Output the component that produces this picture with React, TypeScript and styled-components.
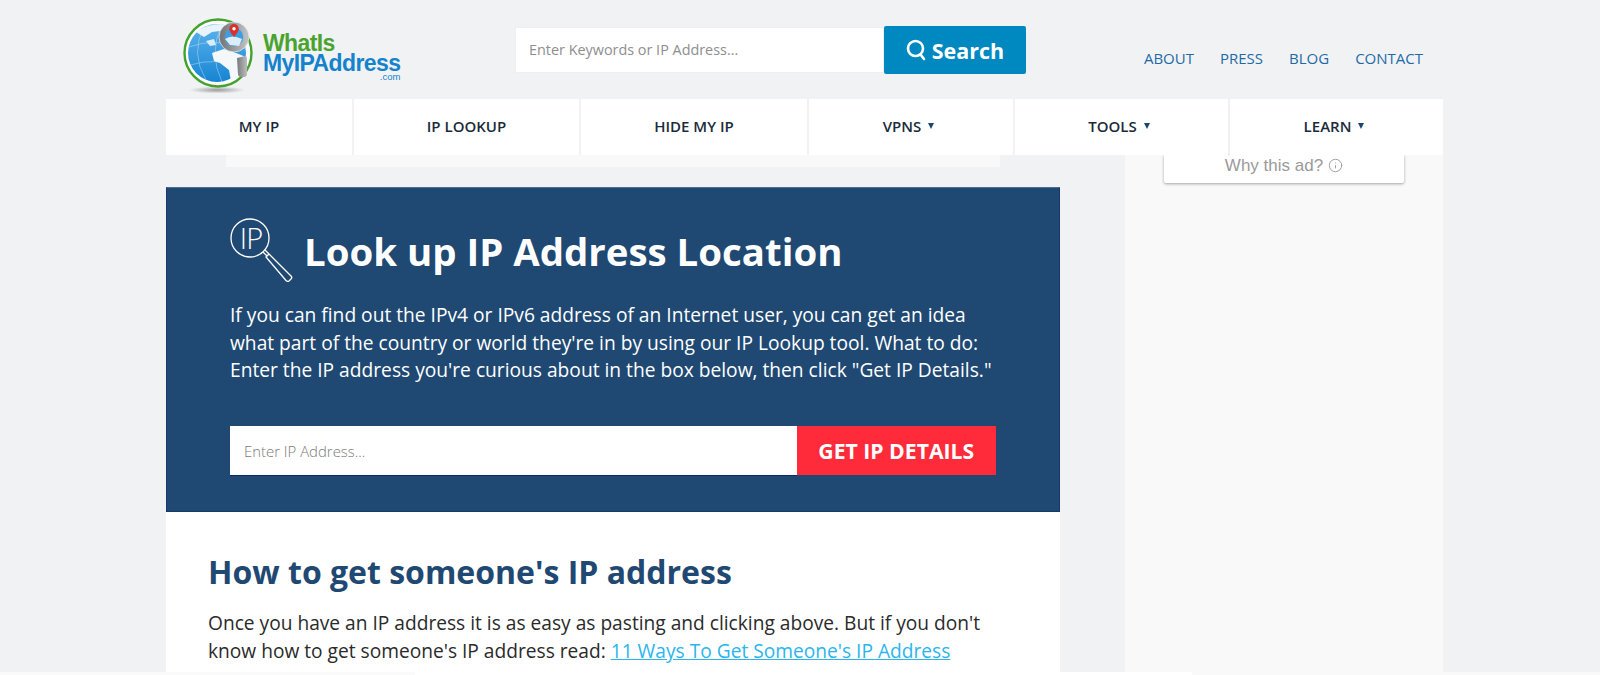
import React from "react";
import styled, { createGlobalStyle } from "styled-components";
import { Info } from "lucide-react";

const GlobalStyle = createGlobalStyle`
  html, body {
    margin: 0;
    padding: 0;
    height: 675px;
    overflow: hidden;
    background: #f1f2f4;
    font-family: "Open Sans", "Liberation Sans", sans-serif;
  }
  * { box-sizing: border-box; }
`;

const Wrapper = styled.div`
  width: 1277px;
  margin-left: 166px;
`;

const Header = styled.header`
  height: 99px;
  display: flex;
  align-items: flex-start;
`;

const LogoLink = styled.a`
  width: 349px;
  height: 99px;
  padding: 15px 0 0 10px;
  display: flex;
  align-items: flex-start;
  gap: 2px;
`;

const LogoText = styled.div`
  display: flex;
  flex-direction: column;
  padding-top: 18px;
  font-family: "Liberation Sans", Arial, sans-serif;
  font-weight: 700;
  letter-spacing: -0.6px;
`;

const LogoTop = styled.span`
  color: #4aa32e;
  font-size: 23px;
  line-height: 20px;
`;

const LogoBottom = styled.span`
  color: #1482cc;
  font-size: 23px;
  line-height: 20px;
`;

const LogoCom = styled.span`
  color: #1482cc;
  font-size: 9.5px;
  font-weight: 400;
  line-height: 8px;
  text-align: right;
  letter-spacing: 0;
`;

const SearchForm = styled.form`
  display: flex;
  margin-top: 26px;
`;

const SearchInput = styled.div`
  width: 369px;
  height: 46px;
  margin-top: 1px;
  background: #fff;
  border: 1px solid #eeeff1;
  padding: 0 0 2px 13px;
  display: flex;
  align-items: center;
  font-size: 14.4px;
  color: #8e8e8e;
`;

const SearchButton = styled.button`
  width: 142px;
  height: 48px;
  border: 0;
  border-radius: 2px;
  background: #0088c0;
  color: #fff;
  font-family: inherit;
  font-weight: 700;
  font-size: 21.5px;
  display: flex;
  align-items: center;
  justify-content: center;
  gap: 6px;
`;

const TopLinks = styled.nav`
  margin-left: auto;
  display: flex;
  gap: 26px;
  padding: 49px 20px 0 0;
`;

const TopLink = styled.a`
  color: #1f6aa5;
  font-size: 15px;
  line-height: 18px;
`;

const MainNav = styled.nav`
  display: flex;
  gap: 2px;
  height: 56px;
  position: relative;
  z-index: 2;
`;

const NavItem = styled.a<{ $w: number }>`
  width: ${(p) => p.$w}px;
  background: #fff;
  display: flex;
  align-items: center;
  justify-content: center;
  gap: 7px;
  padding-bottom: 2px;
  color: #1a2a3a;
  font-size: 15px;
  font-weight: 600;
`;

const Caret = styled.span`
  width: 0;
  height: 0;
  margin-right: 5px;
  border-left: 3.5px solid transparent;
  border-right: 3.5px solid transparent;
  border-top: 6px solid #1f466f;
`;

const Columns = styled.div`
  display: flex;
  align-items: stretch;
`;

const MainColumn = styled.main`
  width: 894px;
`;

const AdRemnant = styled.div`
  width: 774px;
  height: 12px;
  margin: 0 0 20px 60px;
  background: #f9f9fa;
`;

const LookupPanel = styled.section`
  background: #1f4973;
  border: 1px solid #16386a;
  border-top-color: #4d6f93;
  height: 325px;
  padding: 30px 63px 0 63px;
  color: #fff;
`;

const LookupTitleRow = styled.div`
  display: flex;
  align-items: flex-start;
  gap: 10px;
`;

const LookupTitle = styled.h1`
  margin: 9px 0 0;
  font-size: 38.4px;
  line-height: 48px;
  font-weight: 700;
  white-space: nowrap;
`;

const LookupText = styled.p`
  margin: 15px 0 0;
  font-size: 19.2px;
  line-height: 27.5px;
  font-weight: 500;
  white-space: nowrap;
`;

const LookupForm = styled.form`
  display: flex;
  margin-top: 42px;
`;

const LookupInput = styled.div`
  width: 568px;
  height: 49px;
  background: #fff;
  box-shadow: 0 1px 0 #0d2a66;
  padding: 1px 0 0 14px;
  display: flex;
  align-items: center;
  font-size: 14.9px;
  font-weight: 300;
  color: #7a7a7a;
`;

const LookupButton = styled.button`
  width: 200px;
  height: 49px;
  border: 0;
  background: #ff2a3a;
  color: #fff;
  font-family: inherit;
  font-size: 21.2px;
  font-weight: 700;
  padding: 0;
  white-space: nowrap;
`;

const Article = styled.article`
  background: #fff;
  height: 164px;
  padding: 38px 42px 0;
`;

const ArticleTitle = styled.h2`
  margin: 0;
  color: #1f4973;
  font-size: 32px;
  line-height: 44px;
  font-weight: 700;
`;

const ArticleText = styled.p`
  margin: 16px 0 0;
  color: #2a2a2a;
  font-size: 19.16px;
  line-height: 27.5px;
  font-weight: 400;
  white-space: nowrap;
`;

const ArticleLink = styled.a`
  color: #2bb5ee;
  text-decoration: underline;
`;

const Sidebar = styled.aside`
  width: 318px;
  margin-left: 65px;
  height: 520px;
  background: #f9f9fa;
  padding: 0 39px 0 39px;
`;

const AdCard = styled.div`
  height: 28px;
  background: #fff;
  border-radius: 0 0 2px 2px;
  box-shadow: 0 1px 3px rgba(0, 0, 0, 0.35);
  display: flex;
  align-items: flex-start;
  justify-content: center;
  gap: 5px;
  font-family: "Liberation Sans", Arial, sans-serif;
  font-size: 17px;
  line-height: 21px;
  color: #9a9a9a;
`;

const InfoIcon = styled(Info)`
  margin-top: 3px;
`;

const BottomStrip = styled.div`
  position: absolute;
  left: 0;
  right: 0;
  top: 672px;
  height: 3px;
  display: flex;
`;

const StripPart = styled.div<{ $w: number; $bg: string }>`
  width: ${(p) => p.$w}px;
  background: ${(p) => p.$bg};
`;

const GlobeLogo = () => (
  <svg width="85" height="80" viewBox="0 0 85 80">
    <defs>
      <linearGradient id="sea" x1="0" y1="0" x2="0" y2="1">
        <stop offset="0" stopColor="#5db4ec" />
        <stop offset="1" stopColor="#1784d2" />
      </linearGradient>
      <linearGradient id="steel" x1="0" y1="0" x2="1" y2="0">
        <stop offset="0" stopColor="#77797c" />
        <stop offset="1" stopColor="#bcbdbf" />
      </linearGradient>
      <radialGradient id="shade">
        <stop offset="0" stopColor="#9c9c9c" />
        <stop offset="1" stopColor="#f1f2f4" />
      </radialGradient>
    </defs>
    <ellipse cx="41" cy="75" rx="28" ry="3.5" fill="url(#shade)" />
    <circle cx="42" cy="38" r="33.5" fill="#fff" stroke="#43a22d" strokeWidth="2.4" />
    <circle cx="41" cy="38" r="29" fill="url(#sea)" />
    <g stroke="#bfe0f6" strokeWidth="0.6" fill="none" opacity="0.8">
      <path d="M12.5 32 Q40 22 70 34" />
      <path d="M14 50 Q40 42 68 52" />
      <path d="M28 12 Q14 38 30 65" />
      <path d="M46 9 Q32 38 46 67" />
    </g>
    <path d="M20 17 Q30 9 46 9 L52 12 L44 16 L36 17 L28 22 Z" fill="#e8f3fb" />
    <path d="M30 26 L38 24 L40 30 L34 31 Z" fill="#d8ecf9" />
    <path d="M36 38 L48 34 L60 38 L70 42 L68 52 L60 62 L55 66 L53 55 L44 48 L38 46 Z" fill="#f4f8fb" />
    <circle cx="58" cy="22" r="12" fill="#3b9fe4" stroke="url(#steel)" strokeWidth="5.5" />
    <circle cx="58" cy="22" r="15" fill="none" stroke="#e5e6e8" strokeWidth="0.8" />
    <path d="M49 24 Q56 19 66 24 L63 31 L54 30 Z" fill="#dcedf9" />
    <path d="M58 9 a4.8 4.8 0 0 1 4.8 4.8 c0 3 -4.8 8.2 -4.8 8.2 s-4.8 -5.2 -4.8 -8.2 a4.8 4.8 0 0 1 4.8 -4.8 Z" fill="#d8322e" />
    <circle cx="58" cy="13.8" r="1.7" fill="#fff" />
    <path d="M61 43 L69 41 Q71 41 71 43 L71 59 Q71 62 68 62 L65 62 Q62 62 62 59 Z" fill="url(#steel)" />
  </svg>
);

const MagnifierIcon = () => (
  <svg width="64" height="68" viewBox="0 0 64 68" fill="none" stroke="#fff" strokeWidth="1.3">
    <circle cx="20" cy="20" r="19" />
    <path d="M33 34 L37 38 M35 32 L39 36 M36 39 L39 36 L61 58 Q62.5 59.5 61 61 L59 63 Q57.5 64 56 62.5 Z" />
    <text
      x="21"
      y="31"
      textAnchor="middle"
      fill="#fff"
      stroke="none"
      fontFamily="Open Sans"
      fontWeight="300"
      fontSize="29"
      letterSpacing="-1"
    >
      IP
    </text>
  </svg>
);

const SearchGlyph = () => (
  <svg width="20" height="22" viewBox="0 0 20 22" fill="none" stroke="#fff" strokeWidth="2.6" strokeLinecap="round">
    <circle cx="9.5" cy="9.5" r="7.5" />
    <path d="M14.5 15.5 L18 20" />
  </svg>
);

const NAV = [
  { label: "MY IP", w: 186 },
  { label: "IP LOOKUP", w: 225 },
  { label: "HIDE MY IP", w: 226 },
  { label: "VPNS", w: 204, caret: true },
  { label: "TOOLS", w: 213, caret: true },
  { label: "LEARN", w: 213, caret: true },
];

const App = () => {
  return (
    <>
      <GlobalStyle />
      <Wrapper>
        <Header>
          <LogoLink>
            <GlobeLogo />
            <LogoText>
              <LogoTop>WhatIs</LogoTop>
              <LogoBottom>MyIPAddress</LogoBottom>
              <LogoCom>.com</LogoCom>
            </LogoText>
          </LogoLink>
          <SearchForm>
            <SearchInput>Enter Keywords or IP Address...</SearchInput>
            <SearchButton type="button">
              <SearchGlyph />
              Search
            </SearchButton>
          </SearchForm>
          <TopLinks>
            <TopLink>ABOUT</TopLink>
            <TopLink>PRESS</TopLink>
            <TopLink>BLOG</TopLink>
            <TopLink>CONTACT</TopLink>
          </TopLinks>
        </Header>
        <MainNav>
          {NAV.map((item) => (
            <NavItem key={item.label} $w={item.w}>
              {item.label}
              {item.caret && <Caret />}
            </NavItem>
          ))}
        </MainNav>
        <Columns>
          <MainColumn>
            <AdRemnant />
            <LookupPanel>
              <LookupTitleRow>
                <MagnifierIcon />
                <LookupTitle>Look up IP Address Location</LookupTitle>
              </LookupTitleRow>
              <LookupText>
                If you can find out the IPv4 or IPv6 address of an Internet user, you can get an idea
                <br />
                what part of the country or world they're in by using our IP Lookup tool. What to do:
                <br />
                Enter the IP address you're curious about in the box below, then click "Get IP Details."
              </LookupText>
              <LookupForm>
                <LookupInput>Enter IP Address...</LookupInput>
                <LookupButton type="button">GET IP DETAILS</LookupButton>
              </LookupForm>
            </LookupPanel>
            <Article>
              <ArticleTitle>How to get someone's IP address</ArticleTitle>
              <ArticleText>
                Once you have an IP address it is as easy as pasting and clicking above. But if you don't
                <br />
                know how to get someone's IP address read: <ArticleLink>11 Ways To Get Someone's IP Address</ArticleLink>
              </ArticleText>
            </Article>
          </MainColumn>
          <Sidebar>
            <AdCard>
              Why this ad?
              <InfoIcon size={15} strokeWidth={1.5} />
            </AdCard>
          </Sidebar>
        </Columns>
      </Wrapper>
      <BottomStrip>
        <StripPart $w={415} $bg="#fafafa" />
        <StripPart $w={777} $bg="#ffffff" />
        <StripPart $w={408} $bg="#f9f9fa" />
      </BottomStrip>
    </>
  );
};

export default App;
